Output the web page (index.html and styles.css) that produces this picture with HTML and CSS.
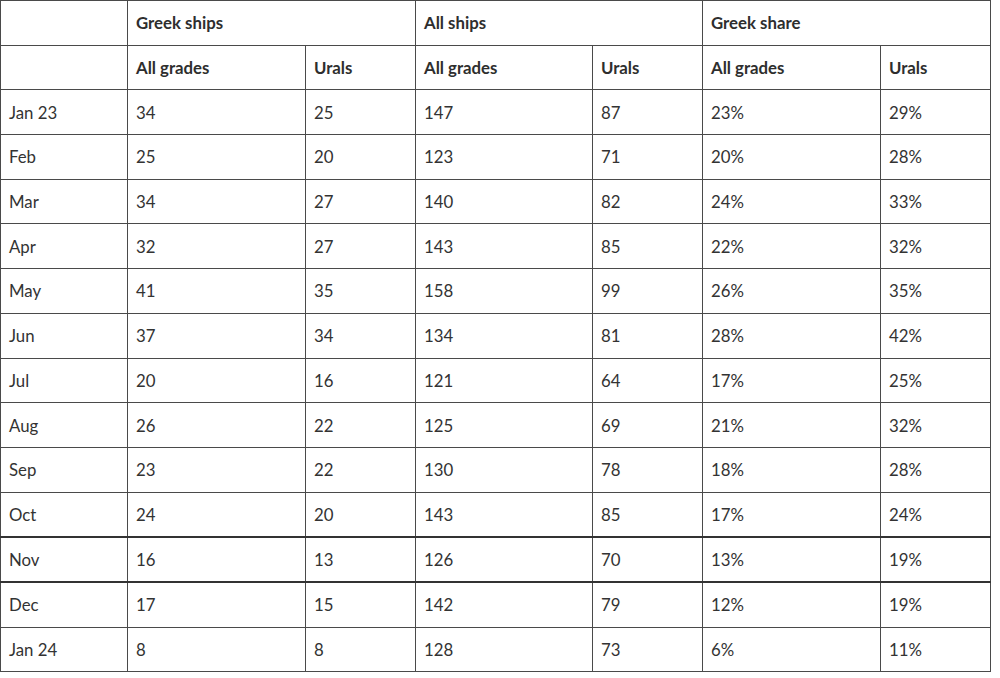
FILE: index.html
```html
<!DOCTYPE html>
<html>
<head>
<meta charset="utf-8">
<link rel="stylesheet" href="styles.css">
</head>
<body>
<table class="data">
  <colgroup>
    <col class="c-month"><col class="c-wide"><col class="c-narrow"><col class="c-wide2"><col class="c-narrow"><col class="c-wide"><col class="c-narrow">
  </colgroup>
  <thead>
    <tr><th></th><th colspan="2">Greek ships</th><th colspan="2">All ships</th><th colspan="2">Greek share</th></tr>
    <tr><th></th><th>All grades</th><th>Urals</th><th>All grades</th><th>Urals</th><th>All grades</th><th>Urals</th></tr>
  </thead>
  <tbody>
    <tr><td>Jan 23</td><td>34</td><td>25</td><td>147</td><td>87</td><td>23%</td><td>29%</td></tr>
    <tr><td>Feb</td><td>25</td><td>20</td><td>123</td><td>71</td><td>20%</td><td>28%</td></tr>
    <tr><td>Mar</td><td>34</td><td>27</td><td>140</td><td>82</td><td>24%</td><td>33%</td></tr>
    <tr><td>Apr</td><td>32</td><td>27</td><td>143</td><td>85</td><td>22%</td><td>32%</td></tr>
    <tr><td>May</td><td>41</td><td>35</td><td>158</td><td>99</td><td>26%</td><td>35%</td></tr>
    <tr><td>Jun</td><td>37</td><td>34</td><td>134</td><td>81</td><td>28%</td><td>42%</td></tr>
    <tr><td>Jul</td><td>20</td><td>16</td><td>121</td><td>64</td><td>17%</td><td>25%</td></tr>
    <tr><td>Aug</td><td>26</td><td>22</td><td>125</td><td>69</td><td>21%</td><td>32%</td></tr>
    <tr><td>Sep</td><td>23</td><td>22</td><td>130</td><td>78</td><td>18%</td><td>28%</td></tr>
    <tr class="thick"><td>Oct</td><td>24</td><td>20</td><td>143</td><td>85</td><td>17%</td><td>24%</td></tr>
    <tr class="thick"><td>Nov</td><td>16</td><td>13</td><td>126</td><td>70</td><td>13%</td><td>19%</td></tr>
    <tr><td>Dec</td><td>17</td><td>15</td><td>142</td><td>79</td><td>12%</td><td>19%</td></tr>
    <tr><td>Jan 24</td><td>8</td><td>8</td><td>128</td><td>73</td><td>6%</td><td>11%</td></tr>
  </tbody>
</table>
</body>
</html>
```
FILE: styles.css
```css
html, body {
  margin: 0;
  padding: 0;
  background: #ffffff;
}
.data {
  border-collapse: collapse;
  table-layout: fixed;
  width: 991px;
  font-family: Lato, "Open Sans", sans-serif;
  font-size: 16.8px;
  color: #333333;
}
.c-month { width: 127px; }
.c-wide { width: 178px; }
.c-wide2 { width: 177px; }
.c-narrow { width: 110px; }
.data th, .data td {
  border: 1px solid #4a4a4a;
  padding: 0 0 0 8px;
  text-align: left;
  vertical-align: middle;
  height: 43.7px;
}
.data th {
  font-weight: 700;
  color: #2e2e2e;
}
.data tr.thick td {
  border-bottom: 2px solid #333333;
  height: 43.2px;
}
```
